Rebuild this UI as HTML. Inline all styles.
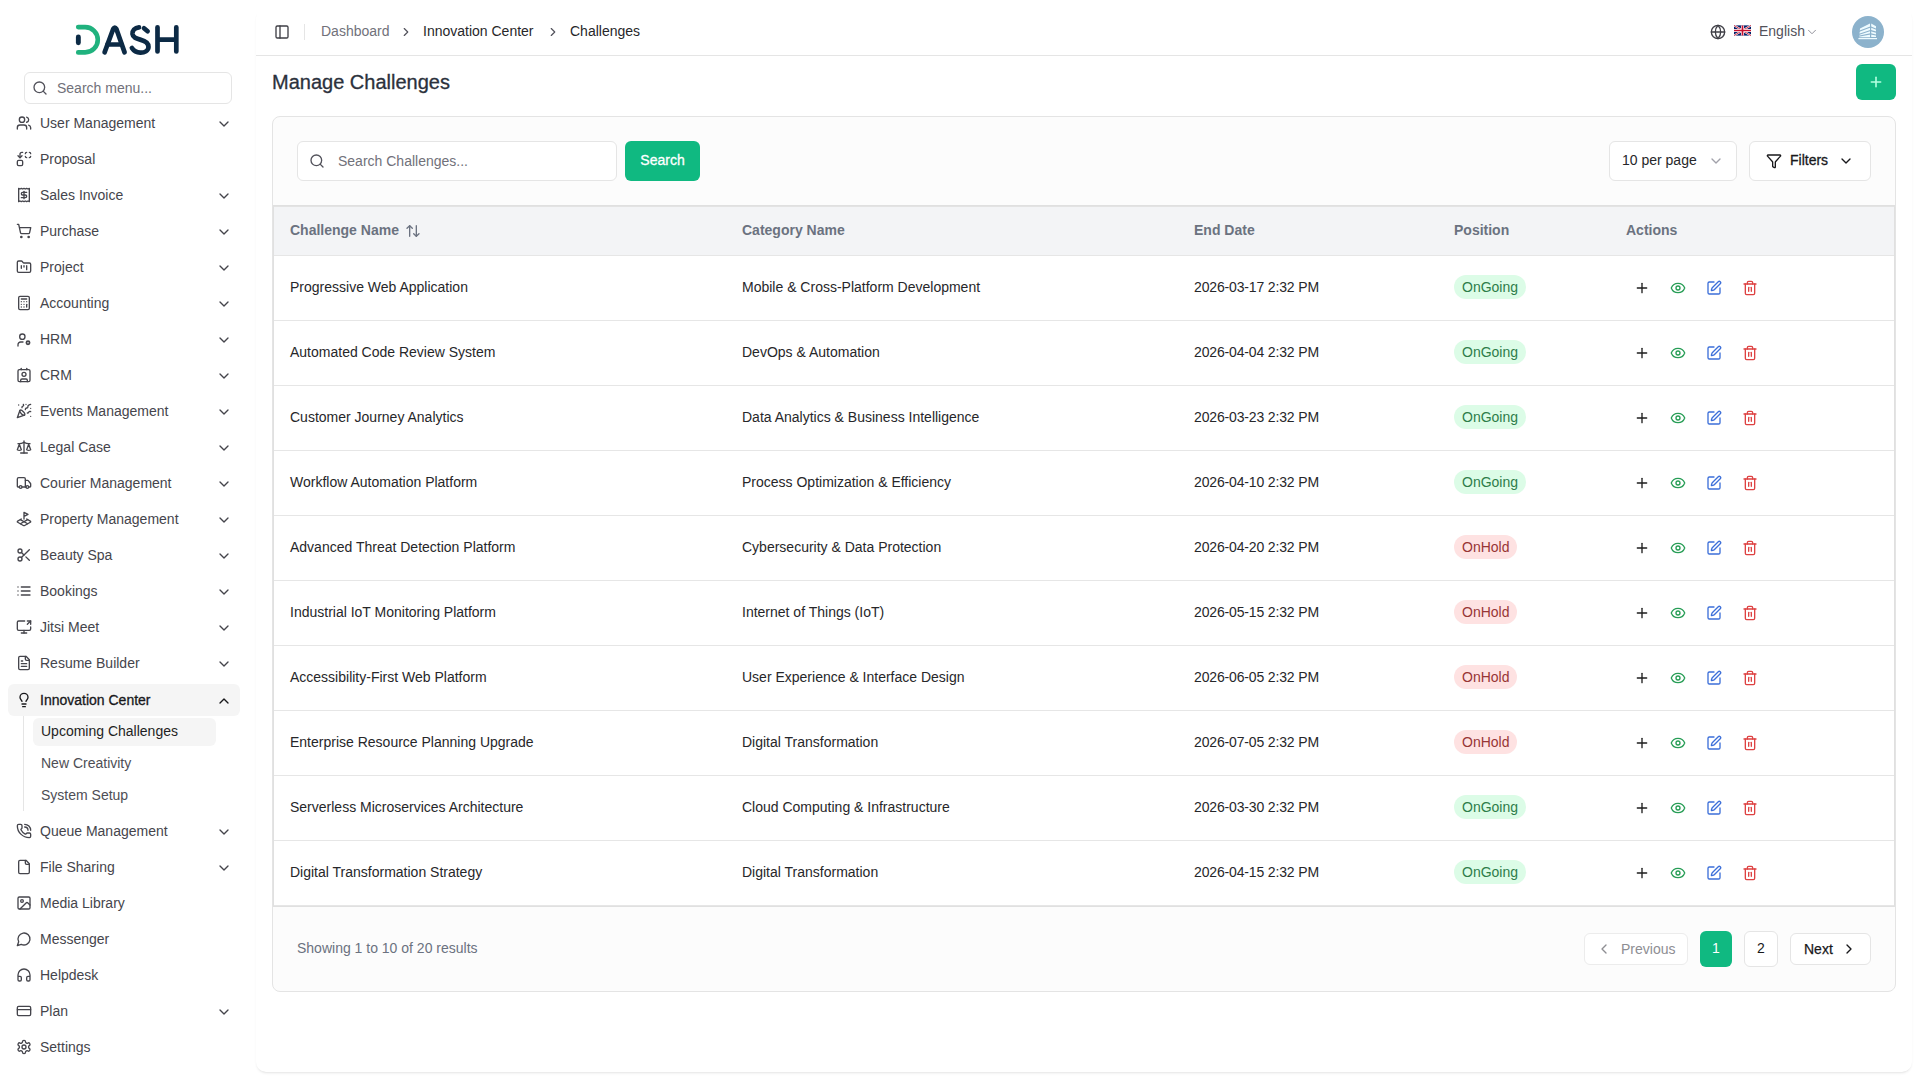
<!DOCTYPE html>
<html><head><meta charset="utf-8"><style>*{box-sizing:border-box;margin:0;padding:0}
html,body{width:1920px;height:1080px;overflow:hidden}
body{background:#fff;font-family:"Liberation Sans",sans-serif;font-size:14px;color:#27272a;position:relative}
svg{display:block}
#sidebar{position:absolute;left:0;top:0;width:256px;height:1080px}
.smenu{position:absolute;left:24px;top:72px;width:208px;height:32px;border:1px solid #e5e5e5;border-radius:6px;background:#fff}
.smenu .sic{position:absolute;left:7px;top:7px;color:#52525b}
.title{-webkit-text-stroke:0.3px #2b313c}
.smenu .sph{position:absolute;left:32px;top:5px;line-height:20px;color:#71717a}
.mi{position:absolute;left:8px;width:232px;height:32px;border-radius:6px;color:#45454c}
.mi .ic{position:absolute;left:8px;top:8px}
.mi .lb{position:absolute;left:32px;top:6px;line-height:20px;white-space:nowrap}
.mi .chev{position:absolute;left:208px;top:9px}
.mi.act{background:#f5f5f5;color:#18181b}
.mi.act .lb{-webkit-text-stroke:0.3px #18181b}
.si{position:absolute;left:33px;width:183px;height:28px;border-radius:6px;padding-left:8px;line-height:26px;color:#4e4e55;white-space:nowrap}
.si.act{background:#f5f5f5;color:#1f1f23}
.subline{position:absolute;left:23px;top:716px;width:1px;height:95px;background:#e5e5e5}
#main{position:absolute;left:256px;top:8px;width:1656px;height:1064px;background:#fff;border-radius:10px;box-shadow:0 2px 3px -1px rgba(0,0,0,.1),0 1px 2px -1px rgba(0,0,0,.06)}
.hdrline{position:absolute;left:256px;top:55px;width:1656px;height:1px;background:#e5e5e5}
.hdr span{position:absolute}
.panelic{left:274px;top:24px;color:#3f3f46}
.vdiv{left:304px;top:24px;width:1px;height:16px;background:#e5e5e5}
.bc{top:21px;line-height:20px;white-space:nowrap}
.bc1{left:321px;color:#71717a}
.bc2{left:423px;color:#27272a}
.bc3{left:570px;color:#27272a}
.bcc{top:25px;color:#52525b}
.globe{left:1710px;top:24px;color:#3f3f46}
.flag{left:1734px;top:25px}
.eng{left:1759px;top:21px;line-height:20px;color:#52525b}
.engchev{left:1805px;top:25px;color:#8a8a93}
.avatar{left:1852px;top:16px}
.title{position:absolute;left:272px;top:68px;font-size:20px;line-height:28px;color:#2b313c;white-space:nowrap}
.addbtn{position:absolute;left:1856px;top:64px;width:40px;height:36px;background:#10b981;border-radius:6px;color:#b5ffe2;display:flex;align-items:center;justify-content:center}
.card{position:absolute;left:272px;top:116px;width:1624px;height:876px;border:1px solid #e4e4e4;border-radius:8px;background:#fcfcfc}
.sinput{position:absolute;left:297px;top:141px;width:320px;height:40px;border:1px solid #e5e5e5;border-radius:6px;background:#fff}
.sic2{position:absolute;left:11px;top:11px;color:#52525b}
.sph2{position:absolute;left:40px;top:9px;line-height:20px;color:#71717a;white-space:nowrap}
.sbtn{position:absolute;left:625px;top:141px;width:75px;height:40px;border-radius:6px;background:#10b981;color:#fff;text-align:center;line-height:38px;-webkit-text-stroke:0.3px #fff}
.perpage{position:absolute;left:1609px;top:141px;width:128px;height:40px;border:1px solid #e5e5e5;border-radius:6px;background:#fff;color:#27272a}
.perpage>span:first-child{position:absolute;left:12px;top:8px;line-height:20px;white-space:nowrap}
.ppchev{position:absolute;left:98px;top:11px;color:#a1a1aa}
.filters{position:absolute;left:1749px;top:141px;width:122px;height:40px;border:1px solid #e5e5e5;border-radius:6px;background:#fff;color:#18181b}
.fic{position:absolute;left:16px;top:11px}
.ftxt{position:absolute;left:40px;top:8px;line-height:20px;-webkit-text-stroke:0.3px #18181b}
.fchev{position:absolute;left:88px;top:11px}
.tbl{position:absolute;left:273px;top:205px;width:1622px;height:702px;border:1px solid #e0e0e0}
.thbg{position:absolute;left:274px;top:206px;width:1620px;height:50px;background:#f3f4f6;border-top:1px solid #e3e3e3;border-bottom:1px solid #e6e6e6}
.thead span{position:absolute;top:220px;line-height:20px;font-weight:700;color:#6b7280;white-space:nowrap}
.thead .h1{left:290px}
.thead .sorti{left:405px;top:223px;color:#6b7280}
.thead .h2{left:742px}.thead .h3{left:1194px}.thead .h4{left:1454px}.thead .h5{left:1626px}
.tr{position:absolute;left:274px;width:1620px;height:65px;background:#fff;border-bottom:1px solid #e6e6e6}
.tr span{position:absolute;white-space:nowrap}
.tr .c1,.tr .c2,.tr .c3{top:21px;line-height:20px;color:#27272a}
.tr .c1{left:16px}.tr .c2{left:468px}.tr .c3{left:920px;letter-spacing:-0.15px}
.badge{left:1180px;top:19px;height:24px;line-height:24px;padding:0 8px;border-radius:12px}
.bg{background:#dcfce7;color:#2e7d4a}
.bh{background:#fee2e2;color:#983535}
.act{top:24px}
.a1{left:1360px;color:#1c1c1c}
.a2{left:1396px;color:#269d55}
.a3{left:1432px;color:#3c6fd9}
.a4{left:1468px;color:#de4242}
.tr:last-of-type{}
.showing{position:absolute;left:297px;top:938px;line-height:20px;color:#6b7280}
.pprev{position:absolute;left:1584px;top:933px;width:104px;height:32px;border:1px solid #ececec;border-radius:6px;background:#fff;color:#8e8e93}
.pprev svg{position:absolute;left:11px;top:7px}
.pprev span{position:absolute;left:36px;top:5px;line-height:20px}
.p1{position:absolute;left:1700px;top:931px;width:32px;height:36px;border-radius:6px;background:#10b981;color:#fff;text-align:center;line-height:34px}
.p2{position:absolute;left:1744px;top:931px;width:34px;height:36px;border-radius:6px;border:1px solid #e5e5e5;background:#fff;color:#18181b;text-align:center;line-height:32px}
.pnext{position:absolute;left:1790px;top:933px;width:81px;height:32px;border:1px solid #e5e5e5;border-radius:6px;background:#fff;color:#18181b}
.pnext span{position:absolute;left:13px;top:5px;line-height:20px;-webkit-text-stroke:0.25px #18181b}
.pnext svg{position:absolute;left:50px;top:7px}
</style></head><body>
<div id="sidebar">
<svg width="140" height="50" viewBox="60 15 140 50" style="position:absolute;left:60px;top:15px">
<g fill="none" stroke-linecap="round" stroke-linejoin="round">
<path d="M78.2 27.1 H85.15 A12.65 12.65 0 0 1 85.15 52.4 H78.2" stroke="#20b27e" stroke-width="4.6"/>
<path d="M78.35 37 V42.8" stroke="#0c2a45" stroke-width="4.9"/>
<g stroke="#0c2a45" stroke-width="4.7">
<path d="M104.6 52.4 L113.2 29 Q114.8 26.3 116.4 29 L124.6 52.4"/>
<path d="M107.5 44.5 H121.5"/>
<path d="M147.6 31.2 L144 28.2"/>
<path d="M139 27.3 C134.6 27.6 132.2 30.6 132.5 34 C132.9 37.6 136.2 38.6 140.2 39.6 C145.2 40.9 148.7 42.6 148.5 47 C148.3 51 144.5 52.7 140.3 52.6 C136.4 52.5 133.6 50.6 131.9 48"/>
<path d="M157.5 27.3 V51.5 M176.3 27.3 V51.5 M157.5 39.6 H176.3"/>
</g></g>
</svg>
<div class="smenu"><span class="sic"><svg width="16" height="16" viewBox="0 0 24 24" fill="none" stroke="currentColor" stroke-width="2" stroke-linecap="round" stroke-linejoin="round" ><circle cx="11" cy="11" r="8"/><path d="m21 21-4.3-4.3"/></svg></span><span class="sph">Search menu...</span></div>
<div class="mi" style="top:107px"><span class="ic"><svg width="16" height="16" viewBox="0 0 24 24" fill="none" stroke="currentColor" stroke-width="2" stroke-linecap="round" stroke-linejoin="round" ><path d="M16 21v-2a4 4 0 0 0-4-4H6a4 4 0 0 0-4 4v2"/><circle cx="9" cy="7" r="4"/><path d="M22 21v-2a4 4 0 0 0-3-3.87"/><path d="M16 3.13a4 4 0 0 1 0 7.75"/></svg></span><span class="lb">User Management</span><span class="chev"><svg width="16" height="16" viewBox="0 0 24 24" fill="none" stroke="currentColor" stroke-width="2" stroke-linecap="round" stroke-linejoin="round" ><path d="m6 9 6 6 6-6"/></svg></span></div><div class="mi" style="top:143px"><span class="ic"><svg width="16" height="16" viewBox="0 0 24 24" fill="none" stroke="currentColor" stroke-width="2" stroke-linecap="round" stroke-linejoin="round" ><path d="M14 4a2 2 0 0 1 2-2"/><path d="M16 10a2 2 0 0 1-2-2"/><path d="M20 2a2 2 0 0 1 2 2"/><path d="M22 8a2 2 0 0 1-2 2"/><path d="m3 7 3 3 3-3"/><path d="M6 10V5a3 3 0 0 1 3-3h1"/><rect x="2" y="14" width="8" height="8" rx="2"/></svg></span><span class="lb">Proposal</span></div><div class="mi" style="top:179px"><span class="ic"><svg width="16" height="16" viewBox="0 0 24 24" fill="none" stroke="currentColor" stroke-width="2" stroke-linecap="round" stroke-linejoin="round" ><path d="M4 2v20l2-1 2 1 2-1 2 1 2-1 2 1 2-1 2 1V2l-2 1-2-1-2 1-2-1-2 1-2-1-2 1Z"/><path d="M16 8h-6a2 2 0 1 0 0 4h4a2 2 0 1 1 0 4H8"/><path d="M12 17.5v-11"/></svg></span><span class="lb">Sales Invoice</span><span class="chev"><svg width="16" height="16" viewBox="0 0 24 24" fill="none" stroke="currentColor" stroke-width="2" stroke-linecap="round" stroke-linejoin="round" ><path d="m6 9 6 6 6-6"/></svg></span></div><div class="mi" style="top:215px"><span class="ic"><svg width="16" height="16" viewBox="0 0 24 24" fill="none" stroke="currentColor" stroke-width="2" stroke-linecap="round" stroke-linejoin="round" ><circle cx="8" cy="21" r="1"/><circle cx="19" cy="21" r="1"/><path d="M2.05 2.05h2l2.66 12.42a2 2 0 0 0 2 1.58h9.78a2 2 0 0 0 1.95-1.57l1.65-7.43H5.12"/></svg></span><span class="lb">Purchase</span><span class="chev"><svg width="16" height="16" viewBox="0 0 24 24" fill="none" stroke="currentColor" stroke-width="2" stroke-linecap="round" stroke-linejoin="round" ><path d="m6 9 6 6 6-6"/></svg></span></div><div class="mi" style="top:251px"><span class="ic"><svg width="16" height="16" viewBox="0 0 24 24" fill="none" stroke="currentColor" stroke-width="2" stroke-linecap="round" stroke-linejoin="round" ><path d="M4 20h16a2 2 0 0 0 2-2V8a2 2 0 0 0-2-2h-7.93a2 2 0 0 1-1.66-.9l-.82-1.2A2 2 0 0 0 7.93 3H4a2 2 0 0 0-2 2v13c0 1.1.9 2 2 2Z"/><path d="M8 10v4"/><path d="M12 10v2"/><path d="M16 10v6"/></svg></span><span class="lb">Project</span><span class="chev"><svg width="16" height="16" viewBox="0 0 24 24" fill="none" stroke="currentColor" stroke-width="2" stroke-linecap="round" stroke-linejoin="round" ><path d="m6 9 6 6 6-6"/></svg></span></div><div class="mi" style="top:287px"><span class="ic"><svg width="16" height="16" viewBox="0 0 24 24" fill="none" stroke="currentColor" stroke-width="2" stroke-linecap="round" stroke-linejoin="round" ><rect width="16" height="20" x="4" y="2" rx="2"/><line x1="8" x2="16" y1="6" y2="6"/><line x1="16" x2="16" y1="14" y2="18"/><path d="M16 10h.01"/><path d="M12 10h.01"/><path d="M8 10h.01"/><path d="M12 14h.01"/><path d="M8 14h.01"/><path d="M12 18h.01"/><path d="M8 18h.01"/></svg></span><span class="lb">Accounting</span><span class="chev"><svg width="16" height="16" viewBox="0 0 24 24" fill="none" stroke="currentColor" stroke-width="2" stroke-linecap="round" stroke-linejoin="round" ><path d="m6 9 6 6 6-6"/></svg></span></div><div class="mi" style="top:323px"><span class="ic"><svg width="16" height="16" viewBox="0 0 24 24" fill="none" stroke="currentColor" stroke-width="2" stroke-linecap="round" stroke-linejoin="round" ><circle cx="9.5" cy="8.5" r="4"/><path d="M3 22.5v-2a4 4 0 0 1 4-4h3.5"/><circle cx="18" cy="17.5" r="2.4" stroke-width="2.6"/></svg></span><span class="lb">HRM</span><span class="chev"><svg width="16" height="16" viewBox="0 0 24 24" fill="none" stroke="currentColor" stroke-width="2" stroke-linecap="round" stroke-linejoin="round" ><path d="m6 9 6 6 6-6"/></svg></span></div><div class="mi" style="top:359px"><span class="ic"><svg width="16" height="16" viewBox="0 0 24 24" fill="none" stroke="currentColor" stroke-width="2" stroke-linecap="round" stroke-linejoin="round" ><path d="M16 2v2"/><path d="M7 22v-2a2 2 0 0 1 2-2h6a2 2 0 0 1 2 2v2"/><path d="M8 2v2"/><circle cx="12" cy="11" r="3"/><rect x="3" y="4" width="18" height="18" rx="2"/></svg></span><span class="lb">CRM</span><span class="chev"><svg width="16" height="16" viewBox="0 0 24 24" fill="none" stroke="currentColor" stroke-width="2" stroke-linecap="round" stroke-linejoin="round" ><path d="m6 9 6 6 6-6"/></svg></span></div><div class="mi" style="top:395px"><span class="ic"><svg width="16" height="16" viewBox="0 0 24 24" fill="none" stroke="currentColor" stroke-width="2" stroke-linecap="round" stroke-linejoin="round" ><path d="M5.8 11.3 2 22l10.7-3.79"/><path d="M4 3h.01"/><path d="M22 8h.01"/><path d="M15 2h.01"/><path d="M22 20h.01"/><path d="m22 2-2.24.75a2.9 2.9 0 0 0-1.96 3.12c.1.86-.57 1.63-1.45 1.63h-.38c-.86 0-1.6.6-1.76 1.44L14 10"/><path d="m22 13-.82-.33c-.86-.34-1.82.2-1.98 1.11c-.11.7-.72 1.22-1.43 1.22H17"/><path d="m11 2 .33.82c.34.86-.2 1.82-1.11 1.98C9.52 4.9 9 5.52 9 6.23V7"/><path d="M11 13c1.93 1.93 2.83 4.17 2 5-.83.83-3.07-.07-5-2-1.93-1.93-2.83-4.17-2-5 .83-.83 3.07.07 5 2Z"/></svg></span><span class="lb">Events Management</span><span class="chev"><svg width="16" height="16" viewBox="0 0 24 24" fill="none" stroke="currentColor" stroke-width="2" stroke-linecap="round" stroke-linejoin="round" ><path d="m6 9 6 6 6-6"/></svg></span></div><div class="mi" style="top:431px"><span class="ic"><svg width="16" height="16" viewBox="0 0 24 24" fill="none" stroke="currentColor" stroke-width="2" stroke-linecap="round" stroke-linejoin="round" ><path d="m16 16 3-8 3 8c-.87.65-1.92 1-3 1s-2.13-.35-3-1Z"/><path d="m2 16 3-8 3 8c-.87.65-1.92 1-3 1s-2.13-.35-3-1Z"/><path d="M7 21h10"/><path d="M12 3v18"/><path d="M3 7h2c2 0 5-1 7-2 2 1 5 2 7 2h2"/></svg></span><span class="lb">Legal Case</span><span class="chev"><svg width="16" height="16" viewBox="0 0 24 24" fill="none" stroke="currentColor" stroke-width="2" stroke-linecap="round" stroke-linejoin="round" ><path d="m6 9 6 6 6-6"/></svg></span></div><div class="mi" style="top:467px"><span class="ic"><svg width="16" height="16" viewBox="0 0 24 24" fill="none" stroke="currentColor" stroke-width="2" stroke-linecap="round" stroke-linejoin="round" ><path d="M14 18V6a2 2 0 0 0-2-2H4a2 2 0 0 0-2 2v11a1 1 0 0 0 1 1h2"/><path d="M15 18H9"/><path d="M19 18h2a1 1 0 0 0 1-1v-3.65a1 1 0 0 0-.22-.624l-3.48-4.35A1 1 0 0 0 17.52 8H14"/><circle cx="17" cy="18" r="2"/><circle cx="7" cy="18" r="2"/></svg></span><span class="lb">Courier Management</span><span class="chev"><svg width="16" height="16" viewBox="0 0 24 24" fill="none" stroke="currentColor" stroke-width="2" stroke-linecap="round" stroke-linejoin="round" ><path d="m6 9 6 6 6-6"/></svg></span></div><div class="mi" style="top:503px"><span class="ic"><svg width="16" height="16" viewBox="0 0 24 24" fill="none" stroke="currentColor" stroke-width="2" stroke-linecap="round" stroke-linejoin="round" ><path d="m12 8 6-3-6-3v10"/><path d="m8 11.99-5.5 3.14a1 1 0 0 0 0 1.74l8.5 4.86a2 2 0 0 0 2 0l8.5-4.86a1 1 0 0 0 0-1.74L16 12"/><path d="m6.49 12.85 11.02 6.3"/><path d="M17.51 12.85 6.5 19.15"/></svg></span><span class="lb">Property Management</span><span class="chev"><svg width="16" height="16" viewBox="0 0 24 24" fill="none" stroke="currentColor" stroke-width="2" stroke-linecap="round" stroke-linejoin="round" ><path d="m6 9 6 6 6-6"/></svg></span></div><div class="mi" style="top:539px"><span class="ic"><svg width="16" height="16" viewBox="0 0 24 24" fill="none" stroke="currentColor" stroke-width="2" stroke-linecap="round" stroke-linejoin="round" ><circle cx="6" cy="6" r="3"/><path d="M8.12 8.12 12 12"/><path d="M20 4 8.12 15.88"/><circle cx="6" cy="18" r="3"/><path d="M14.8 14.8 20 20"/></svg></span><span class="lb">Beauty Spa</span><span class="chev"><svg width="16" height="16" viewBox="0 0 24 24" fill="none" stroke="currentColor" stroke-width="2" stroke-linecap="round" stroke-linejoin="round" ><path d="m6 9 6 6 6-6"/></svg></span></div><div class="mi" style="top:575px"><span class="ic"><svg width="16" height="16" viewBox="0 0 24 24" fill="none" stroke="currentColor" stroke-width="2" stroke-linecap="round" stroke-linejoin="round" ><path d="M3 12h.01"/><path d="M3 18h.01"/><path d="M3 6h.01"/><path d="M8 12h13"/><path d="M8 18h13"/><path d="M8 6h13"/></svg></span><span class="lb">Bookings</span><span class="chev"><svg width="16" height="16" viewBox="0 0 24 24" fill="none" stroke="currentColor" stroke-width="2" stroke-linecap="round" stroke-linejoin="round" ><path d="m6 9 6 6 6-6"/></svg></span></div><div class="mi" style="top:611px"><span class="ic"><svg width="16" height="16" viewBox="0 0 24 24" fill="none" stroke="currentColor" stroke-width="2" stroke-linecap="round" stroke-linejoin="round" ><path d="M13 3H4a2 2 0 0 0-2 2v10a2 2 0 0 0 2 2h16a2 2 0 0 0 2-2v-3"/><path d="M8 21h8"/><path d="M12 17v4"/><path d="m17 8 5-5"/><path d="M17 3h5v5"/></svg></span><span class="lb">Jitsi Meet</span><span class="chev"><svg width="16" height="16" viewBox="0 0 24 24" fill="none" stroke="currentColor" stroke-width="2" stroke-linecap="round" stroke-linejoin="round" ><path d="m6 9 6 6 6-6"/></svg></span></div><div class="mi" style="top:647px"><span class="ic"><svg width="16" height="16" viewBox="0 0 24 24" fill="none" stroke="currentColor" stroke-width="2" stroke-linecap="round" stroke-linejoin="round" ><path d="M15 2H6a2 2 0 0 0-2 2v16a2 2 0 0 0 2 2h12a2 2 0 0 0 2-2V7Z"/><path d="M14 2v4a2 2 0 0 0 2 2h4"/><path d="M10 9H8"/><path d="M16 13H8"/><path d="M16 17H8"/></svg></span><span class="lb">Resume Builder</span><span class="chev"><svg width="16" height="16" viewBox="0 0 24 24" fill="none" stroke="currentColor" stroke-width="2" stroke-linecap="round" stroke-linejoin="round" ><path d="m6 9 6 6 6-6"/></svg></span></div><div class="mi act" style="top:684px"><span class="ic"><svg width="16" height="16" viewBox="0 0 24 24" fill="none" stroke="currentColor" stroke-width="2" stroke-linecap="round" stroke-linejoin="round" ><path d="M15 14c.2-1 .7-1.7 1.5-2.5 1-.9 1.5-2.2 1.5-3.5A6 6 0 0 0 6 8c0 1 .2 2.2 1.5 3.5.7.7 1.3 1.5 1.5 2.5"/><path d="M9 18h6"/><path d="M10 22h4"/></svg></span><span class="lb">Innovation Center</span><span class="chev"><svg width="16" height="16" viewBox="0 0 24 24" fill="none" stroke="currentColor" stroke-width="2" stroke-linecap="round" stroke-linejoin="round" ><path d="m18 15-6-6-6 6"/></svg></span></div><div class="si act" style="top:718px">Upcoming Challenges</div><div class="si" style="top:750px">New Creativity</div><div class="si" style="top:782px">System Setup</div><div class="mi" style="top:815px"><span class="ic"><svg width="16" height="16" viewBox="0 0 24 24" fill="none" stroke="currentColor" stroke-width="2" stroke-linecap="round" stroke-linejoin="round" ><path d="M13 2a9 9 0 0 1 9 9"/><path d="M13 6a5 5 0 0 1 5 5"/><path d="M13.832 16.568a1 1 0 0 0 1.213-.303l.355-.465A2 2 0 0 1 17 15h3a2 2 0 0 1 2 2v3a2 2 0 0 1-2 2A18 18 0 0 1 2 4a2 2 0 0 1 2-2h3a2 2 0 0 1 2 2v3a2 2 0 0 1-.8 1.6l-.468.351a1 1 0 0 0-.292 1.233 14 14 0 0 0 6.392 6.384"/></svg></span><span class="lb">Queue Management</span><span class="chev"><svg width="16" height="16" viewBox="0 0 24 24" fill="none" stroke="currentColor" stroke-width="2" stroke-linecap="round" stroke-linejoin="round" ><path d="m6 9 6 6 6-6"/></svg></span></div><div class="mi" style="top:851px"><span class="ic"><svg width="16" height="16" viewBox="0 0 24 24" fill="none" stroke="currentColor" stroke-width="2" stroke-linecap="round" stroke-linejoin="round" ><path d="M15 2H6a2 2 0 0 0-2 2v16a2 2 0 0 0 2 2h12a2 2 0 0 0 2-2V7Z"/><path d="M14 2v4a2 2 0 0 0 2 2h4"/></svg></span><span class="lb">File Sharing</span><span class="chev"><svg width="16" height="16" viewBox="0 0 24 24" fill="none" stroke="currentColor" stroke-width="2" stroke-linecap="round" stroke-linejoin="round" ><path d="m6 9 6 6 6-6"/></svg></span></div><div class="mi" style="top:887px"><span class="ic"><svg width="16" height="16" viewBox="0 0 24 24" fill="none" stroke="currentColor" stroke-width="2" stroke-linecap="round" stroke-linejoin="round" ><rect width="18" height="18" x="3" y="3" rx="2" ry="2"/><circle cx="9" cy="9" r="2"/><path d="m21 15-3.086-3.086a2 2 0 0 0-2.828 0L6 21"/></svg></span><span class="lb">Media Library</span></div><div class="mi" style="top:923px"><span class="ic"><svg width="16" height="16" viewBox="0 0 24 24" fill="none" stroke="currentColor" stroke-width="2" stroke-linecap="round" stroke-linejoin="round" ><path d="M7.9 20A9 9 0 1 0 4 16.1L2 22Z"/></svg></span><span class="lb">Messenger</span></div><div class="mi" style="top:959px"><span class="ic"><svg width="16" height="16" viewBox="0 0 24 24" fill="none" stroke="currentColor" stroke-width="2" stroke-linecap="round" stroke-linejoin="round" ><path d="M3 14h3a2 2 0 0 1 2 2v3a2 2 0 0 1-2 2H5a2 2 0 0 1-2-2v-7a9 9 0 0 1 18 0v7a2 2 0 0 1-2 2h-1a2 2 0 0 1-2-2v-3a2 2 0 0 1 2-2h3"/></svg></span><span class="lb">Helpdesk</span></div><div class="mi" style="top:995px"><span class="ic"><svg width="16" height="16" viewBox="0 0 24 24" fill="none" stroke="currentColor" stroke-width="2" stroke-linecap="round" stroke-linejoin="round" ><rect width="20" height="14" x="2" y="5" rx="2"/><line x1="2" x2="22" y1="10" y2="10"/></svg></span><span class="lb">Plan</span><span class="chev"><svg width="16" height="16" viewBox="0 0 24 24" fill="none" stroke="currentColor" stroke-width="2" stroke-linecap="round" stroke-linejoin="round" ><path d="m6 9 6 6 6-6"/></svg></span></div><div class="mi" style="top:1031px"><span class="ic"><svg width="16" height="16" viewBox="0 0 24 24" fill="none" stroke="currentColor" stroke-width="2" stroke-linecap="round" stroke-linejoin="round" ><path d="M12.22 2h-.44a2 2 0 0 0-2 2v.18a2 2 0 0 1-1 1.73l-.43.25a2 2 0 0 1-2 0l-.15-.08a2 2 0 0 0-2.73.73l-.22.38a2 2 0 0 0 .73 2.73l.15.1a2 2 0 0 1 1 1.72v.51a2 2 0 0 1-1 1.74l-.15.09a2 2 0 0 0-.73 2.730l.22.38a2 2 0 0 0 2.73.73l.15-.08a2 2 0 0 1 2 0l.43.25a2 2 0 0 1 1 1.73V20a2 2 0 0 0 2 2h.44a2 2 0 0 0 2-2v-.18a2 2 0 0 1 1-1.73l.43-.25a2 2 0 0 1 2 0l.15.08a2 2 0 0 0 2.73-.73l.22-.39a2 2 0 0 0-.73-2.73l-.15-.08a2 2 0 0 1-1-1.74v-.5a2 2 0 0 1 1-1.74l.15-.09a2 2 0 0 0 .73-2.73l-.22-.38a2 2 0 0 0-2.73-.73l-.15.08a2 2 0 0 1-2 0l-.43-.25a2 2 0 0 1-1-1.73V4a2 2 0 0 0-2-2z"/><circle cx="12" cy="12" r="3"/></svg></span><span class="lb">Settings</span></div>
<div class="subline"></div>
</div>
<div id="main"></div><div class="hdrline"></div>
<div class="hdr">
 <span class="panelic"><svg width="16" height="16" viewBox="0 0 24 24" fill="none" stroke="currentColor" stroke-width="2" stroke-linecap="round" stroke-linejoin="round" ><rect width="18" height="18" x="3" y="3" rx="2"/><path d="M9 3v18"/></svg></span>
 <span class="vdiv"></span>
 <span class="bc bc1">Dashboard</span><span class="bcc" style="left:399px"><svg width="14" height="14" viewBox="0 0 24 24" fill="none" stroke="currentColor" stroke-width="2" stroke-linecap="round" stroke-linejoin="round" ><path d="m9 18 6-6-6-6"/></svg></span>
 <span class="bc bc2">Innovation Center</span><span class="bcc" style="left:546px"><svg width="14" height="14" viewBox="0 0 24 24" fill="none" stroke="currentColor" stroke-width="2" stroke-linecap="round" stroke-linejoin="round" ><path d="m9 18 6-6-6-6"/></svg></span>
 <span class="bc bc3">Challenges</span>
 <span class="globe"><svg width="16" height="16" viewBox="0 0 24 24" fill="none" stroke="currentColor" stroke-width="2" stroke-linecap="round" stroke-linejoin="round" ><circle cx="12" cy="12" r="10"/><path d="M12 2a14.5 14.5 0 0 0 0 20 14.5 14.5 0 0 0 0-20"/><path d="M2 12h20"/></svg></span>
 <span class="flag"><svg width="17" height="11" viewBox="0 0 60 36"><rect width="60" height="36" fill="#012169"/><path d="M0 0L60 36M60 0L0 36" stroke="#fff" stroke-width="7"/><path d="M0 0L60 36M60 0L0 36" stroke="#C8102E" stroke-width="3"/><path d="M30 0V36M0 18H60" stroke="#fff" stroke-width="11"/><path d="M30 0V36M0 18H60" stroke="#C8102E" stroke-width="6"/></svg></span>
 <span class="eng">English</span><span class="engchev"><svg width="14" height="14" viewBox="0 0 24 24" fill="none" stroke="currentColor" stroke-width="1.6" stroke-linecap="round" stroke-linejoin="round" ><path d="m6 9 6 6 6-6"/></svg></span>
 <span class="avatar"><svg width="32" height="32" viewBox="0 0 32 32"><circle cx="16" cy="16" r="16" fill="#8cb2cc"/><g fill="#eefbff"><path d="M8 12.4 L18 7.5 V21.3 H7.2 Z"/><path d="M19.2 7.6 L24 10.3 V21 H19.2 Z"/></g><g stroke="#8cb2cc" stroke-width="1.1" fill="none"><path d="M6.5 15.6 L18.5 10.9 M6.5 18.4 L18.5 14.6 M6.5 20.2 L18.5 17.9"/><path d="M18.8 11 L25 13.6 M18.8 14.6 L25 16.4 M18.8 17.9 L25 19.3"/></g><path d="M6.4 22.6 H25" stroke="#eefbff" stroke-width="1.2"/></svg></span>
</div>
<div class="title">Manage Challenges</div>
<div class="addbtn"><svg width="16" height="16" viewBox="0 0 24 24" fill="none" stroke="currentColor" stroke-width="2.4" stroke-linecap="round" stroke-linejoin="round" ><path d="M5 12h14"/><path d="M12 5v14"/></svg></div>
<div class="card"></div><div class="tbl"></div><div class="thbg"></div>
 <div class="sinput"><span class="sic2"><svg width="16" height="16" viewBox="0 0 24 24" fill="none" stroke="currentColor" stroke-width="2" stroke-linecap="round" stroke-linejoin="round" ><circle cx="11" cy="11" r="8"/><path d="m21 21-4.3-4.3"/></svg></span><span class="sph2">Search Challenges...</span></div>
 <div class="sbtn">Search</div>
 <div class="perpage"><span>10 per page</span><span class="ppchev"><svg width="16" height="16" viewBox="0 0 24 24" fill="none" stroke="currentColor" stroke-width="2" stroke-linecap="round" stroke-linejoin="round" ><path d="m6 9 6 6 6-6"/></svg></span></div>
 <div class="filters"><span class="fic"><svg width="16" height="16" viewBox="0 0 24 24" fill="none" stroke="currentColor" stroke-width="2" stroke-linecap="round" stroke-linejoin="round" ><path d="M10 20a1 1 0 0 0 .553.895l2 1A1 1 0 0 0 14 21v-7a2 2 0 0 1 .517-1.341L21.74 4.67A1 1 0 0 0 21 3H3a1 1 0 0 0-.742 1.67l7.225 7.989A2 2 0 0 1 10 14z"/></svg></span><span class="ftxt">Filters</span><span class="fchev"><svg width="16" height="16" viewBox="0 0 24 24" fill="none" stroke="currentColor" stroke-width="2" stroke-linecap="round" stroke-linejoin="round" ><path d="m6 9 6 6 6-6"/></svg></span></div>
 <div class="thead">
  <span class="h1">Challenge Name</span><span class="sorti"><svg width="16" height="16" viewBox="0 0 24 24" fill="none" stroke="currentColor" stroke-width="2" stroke-linecap="round" stroke-linejoin="round" ><path d="m21 16-4 4-4-4"/><path d="M17 20V4"/><path d="m3 8 4-4 4 4"/><path d="M7 4v16"/></svg></span>
  <span class="h2">Category Name</span><span class="h3">End Date</span><span class="h4">Position</span><span class="h5">Actions</span>
 </div>
 <div class="tr" style="top:256px">
<span class="c1">Progressive Web Application</span><span class="c2">Mobile &amp; Cross-Platform Development</span><span class="c3">2026-03-17 2:32 PM</span>
<span class="badge bg">OnGoing</span>
<span class="act a1"><svg width="16" height="16" viewBox="0 0 24 24" fill="none" stroke="currentColor" stroke-width="2" stroke-linecap="round" stroke-linejoin="round" ><path d="M5 12h14"/><path d="M12 5v14"/></svg></span><span class="act a2"><svg width="16" height="16" viewBox="0 0 24 24" fill="none" stroke="currentColor" stroke-width="2" stroke-linecap="round" stroke-linejoin="round" ><path d="M2.062 12.348a1 1 0 0 1 0-.696 10.75 10.75 0 0 1 19.876 0 1 1 0 0 1 0 .696 10.75 10.75 0 0 1-19.876 0"/><circle cx="12" cy="12" r="3"/></svg></span><span class="act a3"><svg width="16" height="16" viewBox="0 0 24 24" fill="none" stroke="currentColor" stroke-width="2" stroke-linecap="round" stroke-linejoin="round" ><path d="M12 3H5a2 2 0 0 0-2 2v14a2 2 0 0 0 2 2h14a2 2 0 0 0 2-2v-7"/><path d="M18.375 2.625a1 1 0 0 1 3 3l-9.013 9.014a2 2 0 0 1-.853.505l-2.873.84a.5.5 0 0 1-.62-.62l.84-2.873a2 2 0 0 1 .506-.852z"/></svg></span><span class="act a4"><svg width="16" height="16" viewBox="0 0 24 24" fill="none" stroke="currentColor" stroke-width="2" stroke-linecap="round" stroke-linejoin="round" ><path d="M3 6h18"/><path d="M19 6v14c0 1-1 2-2 2H7c-1 0-2-1-2-2V6"/><path d="M8 6V4c0-1 1-2 2-2h4c1 0 2 1 2 2v2"/><line x1="10" x2="10" y1="11" y2="17"/><line x1="14" x2="14" y1="11" y2="17"/></svg></span>
</div><div class="tr" style="top:321px">
<span class="c1">Automated Code Review System</span><span class="c2">DevOps &amp; Automation</span><span class="c3">2026-04-04 2:32 PM</span>
<span class="badge bg">OnGoing</span>
<span class="act a1"><svg width="16" height="16" viewBox="0 0 24 24" fill="none" stroke="currentColor" stroke-width="2" stroke-linecap="round" stroke-linejoin="round" ><path d="M5 12h14"/><path d="M12 5v14"/></svg></span><span class="act a2"><svg width="16" height="16" viewBox="0 0 24 24" fill="none" stroke="currentColor" stroke-width="2" stroke-linecap="round" stroke-linejoin="round" ><path d="M2.062 12.348a1 1 0 0 1 0-.696 10.75 10.75 0 0 1 19.876 0 1 1 0 0 1 0 .696 10.75 10.75 0 0 1-19.876 0"/><circle cx="12" cy="12" r="3"/></svg></span><span class="act a3"><svg width="16" height="16" viewBox="0 0 24 24" fill="none" stroke="currentColor" stroke-width="2" stroke-linecap="round" stroke-linejoin="round" ><path d="M12 3H5a2 2 0 0 0-2 2v14a2 2 0 0 0 2 2h14a2 2 0 0 0 2-2v-7"/><path d="M18.375 2.625a1 1 0 0 1 3 3l-9.013 9.014a2 2 0 0 1-.853.505l-2.873.84a.5.5 0 0 1-.62-.62l.84-2.873a2 2 0 0 1 .506-.852z"/></svg></span><span class="act a4"><svg width="16" height="16" viewBox="0 0 24 24" fill="none" stroke="currentColor" stroke-width="2" stroke-linecap="round" stroke-linejoin="round" ><path d="M3 6h18"/><path d="M19 6v14c0 1-1 2-2 2H7c-1 0-2-1-2-2V6"/><path d="M8 6V4c0-1 1-2 2-2h4c1 0 2 1 2 2v2"/><line x1="10" x2="10" y1="11" y2="17"/><line x1="14" x2="14" y1="11" y2="17"/></svg></span>
</div><div class="tr" style="top:386px">
<span class="c1">Customer Journey Analytics</span><span class="c2">Data Analytics &amp; Business Intelligence</span><span class="c3">2026-03-23 2:32 PM</span>
<span class="badge bg">OnGoing</span>
<span class="act a1"><svg width="16" height="16" viewBox="0 0 24 24" fill="none" stroke="currentColor" stroke-width="2" stroke-linecap="round" stroke-linejoin="round" ><path d="M5 12h14"/><path d="M12 5v14"/></svg></span><span class="act a2"><svg width="16" height="16" viewBox="0 0 24 24" fill="none" stroke="currentColor" stroke-width="2" stroke-linecap="round" stroke-linejoin="round" ><path d="M2.062 12.348a1 1 0 0 1 0-.696 10.75 10.75 0 0 1 19.876 0 1 1 0 0 1 0 .696 10.75 10.75 0 0 1-19.876 0"/><circle cx="12" cy="12" r="3"/></svg></span><span class="act a3"><svg width="16" height="16" viewBox="0 0 24 24" fill="none" stroke="currentColor" stroke-width="2" stroke-linecap="round" stroke-linejoin="round" ><path d="M12 3H5a2 2 0 0 0-2 2v14a2 2 0 0 0 2 2h14a2 2 0 0 0 2-2v-7"/><path d="M18.375 2.625a1 1 0 0 1 3 3l-9.013 9.014a2 2 0 0 1-.853.505l-2.873.84a.5.5 0 0 1-.62-.62l.84-2.873a2 2 0 0 1 .506-.852z"/></svg></span><span class="act a4"><svg width="16" height="16" viewBox="0 0 24 24" fill="none" stroke="currentColor" stroke-width="2" stroke-linecap="round" stroke-linejoin="round" ><path d="M3 6h18"/><path d="M19 6v14c0 1-1 2-2 2H7c-1 0-2-1-2-2V6"/><path d="M8 6V4c0-1 1-2 2-2h4c1 0 2 1 2 2v2"/><line x1="10" x2="10" y1="11" y2="17"/><line x1="14" x2="14" y1="11" y2="17"/></svg></span>
</div><div class="tr" style="top:451px">
<span class="c1">Workflow Automation Platform</span><span class="c2">Process Optimization &amp; Efficiency</span><span class="c3">2026-04-10 2:32 PM</span>
<span class="badge bg">OnGoing</span>
<span class="act a1"><svg width="16" height="16" viewBox="0 0 24 24" fill="none" stroke="currentColor" stroke-width="2" stroke-linecap="round" stroke-linejoin="round" ><path d="M5 12h14"/><path d="M12 5v14"/></svg></span><span class="act a2"><svg width="16" height="16" viewBox="0 0 24 24" fill="none" stroke="currentColor" stroke-width="2" stroke-linecap="round" stroke-linejoin="round" ><path d="M2.062 12.348a1 1 0 0 1 0-.696 10.75 10.75 0 0 1 19.876 0 1 1 0 0 1 0 .696 10.75 10.75 0 0 1-19.876 0"/><circle cx="12" cy="12" r="3"/></svg></span><span class="act a3"><svg width="16" height="16" viewBox="0 0 24 24" fill="none" stroke="currentColor" stroke-width="2" stroke-linecap="round" stroke-linejoin="round" ><path d="M12 3H5a2 2 0 0 0-2 2v14a2 2 0 0 0 2 2h14a2 2 0 0 0 2-2v-7"/><path d="M18.375 2.625a1 1 0 0 1 3 3l-9.013 9.014a2 2 0 0 1-.853.505l-2.873.84a.5.5 0 0 1-.62-.62l.84-2.873a2 2 0 0 1 .506-.852z"/></svg></span><span class="act a4"><svg width="16" height="16" viewBox="0 0 24 24" fill="none" stroke="currentColor" stroke-width="2" stroke-linecap="round" stroke-linejoin="round" ><path d="M3 6h18"/><path d="M19 6v14c0 1-1 2-2 2H7c-1 0-2-1-2-2V6"/><path d="M8 6V4c0-1 1-2 2-2h4c1 0 2 1 2 2v2"/><line x1="10" x2="10" y1="11" y2="17"/><line x1="14" x2="14" y1="11" y2="17"/></svg></span>
</div><div class="tr" style="top:516px">
<span class="c1">Advanced Threat Detection Platform</span><span class="c2">Cybersecurity &amp; Data Protection</span><span class="c3">2026-04-20 2:32 PM</span>
<span class="badge bh">OnHold</span>
<span class="act a1"><svg width="16" height="16" viewBox="0 0 24 24" fill="none" stroke="currentColor" stroke-width="2" stroke-linecap="round" stroke-linejoin="round" ><path d="M5 12h14"/><path d="M12 5v14"/></svg></span><span class="act a2"><svg width="16" height="16" viewBox="0 0 24 24" fill="none" stroke="currentColor" stroke-width="2" stroke-linecap="round" stroke-linejoin="round" ><path d="M2.062 12.348a1 1 0 0 1 0-.696 10.75 10.75 0 0 1 19.876 0 1 1 0 0 1 0 .696 10.75 10.75 0 0 1-19.876 0"/><circle cx="12" cy="12" r="3"/></svg></span><span class="act a3"><svg width="16" height="16" viewBox="0 0 24 24" fill="none" stroke="currentColor" stroke-width="2" stroke-linecap="round" stroke-linejoin="round" ><path d="M12 3H5a2 2 0 0 0-2 2v14a2 2 0 0 0 2 2h14a2 2 0 0 0 2-2v-7"/><path d="M18.375 2.625a1 1 0 0 1 3 3l-9.013 9.014a2 2 0 0 1-.853.505l-2.873.84a.5.5 0 0 1-.62-.62l.84-2.873a2 2 0 0 1 .506-.852z"/></svg></span><span class="act a4"><svg width="16" height="16" viewBox="0 0 24 24" fill="none" stroke="currentColor" stroke-width="2" stroke-linecap="round" stroke-linejoin="round" ><path d="M3 6h18"/><path d="M19 6v14c0 1-1 2-2 2H7c-1 0-2-1-2-2V6"/><path d="M8 6V4c0-1 1-2 2-2h4c1 0 2 1 2 2v2"/><line x1="10" x2="10" y1="11" y2="17"/><line x1="14" x2="14" y1="11" y2="17"/></svg></span>
</div><div class="tr" style="top:581px">
<span class="c1">Industrial IoT Monitoring Platform</span><span class="c2">Internet of Things (IoT)</span><span class="c3">2026-05-15 2:32 PM</span>
<span class="badge bh">OnHold</span>
<span class="act a1"><svg width="16" height="16" viewBox="0 0 24 24" fill="none" stroke="currentColor" stroke-width="2" stroke-linecap="round" stroke-linejoin="round" ><path d="M5 12h14"/><path d="M12 5v14"/></svg></span><span class="act a2"><svg width="16" height="16" viewBox="0 0 24 24" fill="none" stroke="currentColor" stroke-width="2" stroke-linecap="round" stroke-linejoin="round" ><path d="M2.062 12.348a1 1 0 0 1 0-.696 10.75 10.75 0 0 1 19.876 0 1 1 0 0 1 0 .696 10.75 10.75 0 0 1-19.876 0"/><circle cx="12" cy="12" r="3"/></svg></span><span class="act a3"><svg width="16" height="16" viewBox="0 0 24 24" fill="none" stroke="currentColor" stroke-width="2" stroke-linecap="round" stroke-linejoin="round" ><path d="M12 3H5a2 2 0 0 0-2 2v14a2 2 0 0 0 2 2h14a2 2 0 0 0 2-2v-7"/><path d="M18.375 2.625a1 1 0 0 1 3 3l-9.013 9.014a2 2 0 0 1-.853.505l-2.873.84a.5.5 0 0 1-.62-.62l.84-2.873a2 2 0 0 1 .506-.852z"/></svg></span><span class="act a4"><svg width="16" height="16" viewBox="0 0 24 24" fill="none" stroke="currentColor" stroke-width="2" stroke-linecap="round" stroke-linejoin="round" ><path d="M3 6h18"/><path d="M19 6v14c0 1-1 2-2 2H7c-1 0-2-1-2-2V6"/><path d="M8 6V4c0-1 1-2 2-2h4c1 0 2 1 2 2v2"/><line x1="10" x2="10" y1="11" y2="17"/><line x1="14" x2="14" y1="11" y2="17"/></svg></span>
</div><div class="tr" style="top:646px">
<span class="c1">Accessibility-First Web Platform</span><span class="c2">User Experience &amp; Interface Design</span><span class="c3">2026-06-05 2:32 PM</span>
<span class="badge bh">OnHold</span>
<span class="act a1"><svg width="16" height="16" viewBox="0 0 24 24" fill="none" stroke="currentColor" stroke-width="2" stroke-linecap="round" stroke-linejoin="round" ><path d="M5 12h14"/><path d="M12 5v14"/></svg></span><span class="act a2"><svg width="16" height="16" viewBox="0 0 24 24" fill="none" stroke="currentColor" stroke-width="2" stroke-linecap="round" stroke-linejoin="round" ><path d="M2.062 12.348a1 1 0 0 1 0-.696 10.75 10.75 0 0 1 19.876 0 1 1 0 0 1 0 .696 10.75 10.75 0 0 1-19.876 0"/><circle cx="12" cy="12" r="3"/></svg></span><span class="act a3"><svg width="16" height="16" viewBox="0 0 24 24" fill="none" stroke="currentColor" stroke-width="2" stroke-linecap="round" stroke-linejoin="round" ><path d="M12 3H5a2 2 0 0 0-2 2v14a2 2 0 0 0 2 2h14a2 2 0 0 0 2-2v-7"/><path d="M18.375 2.625a1 1 0 0 1 3 3l-9.013 9.014a2 2 0 0 1-.853.505l-2.873.84a.5.5 0 0 1-.62-.62l.84-2.873a2 2 0 0 1 .506-.852z"/></svg></span><span class="act a4"><svg width="16" height="16" viewBox="0 0 24 24" fill="none" stroke="currentColor" stroke-width="2" stroke-linecap="round" stroke-linejoin="round" ><path d="M3 6h18"/><path d="M19 6v14c0 1-1 2-2 2H7c-1 0-2-1-2-2V6"/><path d="M8 6V4c0-1 1-2 2-2h4c1 0 2 1 2 2v2"/><line x1="10" x2="10" y1="11" y2="17"/><line x1="14" x2="14" y1="11" y2="17"/></svg></span>
</div><div class="tr" style="top:711px">
<span class="c1">Enterprise Resource Planning Upgrade</span><span class="c2">Digital Transformation</span><span class="c3">2026-07-05 2:32 PM</span>
<span class="badge bh">OnHold</span>
<span class="act a1"><svg width="16" height="16" viewBox="0 0 24 24" fill="none" stroke="currentColor" stroke-width="2" stroke-linecap="round" stroke-linejoin="round" ><path d="M5 12h14"/><path d="M12 5v14"/></svg></span><span class="act a2"><svg width="16" height="16" viewBox="0 0 24 24" fill="none" stroke="currentColor" stroke-width="2" stroke-linecap="round" stroke-linejoin="round" ><path d="M2.062 12.348a1 1 0 0 1 0-.696 10.75 10.75 0 0 1 19.876 0 1 1 0 0 1 0 .696 10.75 10.75 0 0 1-19.876 0"/><circle cx="12" cy="12" r="3"/></svg></span><span class="act a3"><svg width="16" height="16" viewBox="0 0 24 24" fill="none" stroke="currentColor" stroke-width="2" stroke-linecap="round" stroke-linejoin="round" ><path d="M12 3H5a2 2 0 0 0-2 2v14a2 2 0 0 0 2 2h14a2 2 0 0 0 2-2v-7"/><path d="M18.375 2.625a1 1 0 0 1 3 3l-9.013 9.014a2 2 0 0 1-.853.505l-2.873.84a.5.5 0 0 1-.62-.62l.84-2.873a2 2 0 0 1 .506-.852z"/></svg></span><span class="act a4"><svg width="16" height="16" viewBox="0 0 24 24" fill="none" stroke="currentColor" stroke-width="2" stroke-linecap="round" stroke-linejoin="round" ><path d="M3 6h18"/><path d="M19 6v14c0 1-1 2-2 2H7c-1 0-2-1-2-2V6"/><path d="M8 6V4c0-1 1-2 2-2h4c1 0 2 1 2 2v2"/><line x1="10" x2="10" y1="11" y2="17"/><line x1="14" x2="14" y1="11" y2="17"/></svg></span>
</div><div class="tr" style="top:776px">
<span class="c1">Serverless Microservices Architecture</span><span class="c2">Cloud Computing &amp; Infrastructure</span><span class="c3">2026-03-30 2:32 PM</span>
<span class="badge bg">OnGoing</span>
<span class="act a1"><svg width="16" height="16" viewBox="0 0 24 24" fill="none" stroke="currentColor" stroke-width="2" stroke-linecap="round" stroke-linejoin="round" ><path d="M5 12h14"/><path d="M12 5v14"/></svg></span><span class="act a2"><svg width="16" height="16" viewBox="0 0 24 24" fill="none" stroke="currentColor" stroke-width="2" stroke-linecap="round" stroke-linejoin="round" ><path d="M2.062 12.348a1 1 0 0 1 0-.696 10.75 10.75 0 0 1 19.876 0 1 1 0 0 1 0 .696 10.75 10.75 0 0 1-19.876 0"/><circle cx="12" cy="12" r="3"/></svg></span><span class="act a3"><svg width="16" height="16" viewBox="0 0 24 24" fill="none" stroke="currentColor" stroke-width="2" stroke-linecap="round" stroke-linejoin="round" ><path d="M12 3H5a2 2 0 0 0-2 2v14a2 2 0 0 0 2 2h14a2 2 0 0 0 2-2v-7"/><path d="M18.375 2.625a1 1 0 0 1 3 3l-9.013 9.014a2 2 0 0 1-.853.505l-2.873.84a.5.5 0 0 1-.62-.62l.84-2.873a2 2 0 0 1 .506-.852z"/></svg></span><span class="act a4"><svg width="16" height="16" viewBox="0 0 24 24" fill="none" stroke="currentColor" stroke-width="2" stroke-linecap="round" stroke-linejoin="round" ><path d="M3 6h18"/><path d="M19 6v14c0 1-1 2-2 2H7c-1 0-2-1-2-2V6"/><path d="M8 6V4c0-1 1-2 2-2h4c1 0 2 1 2 2v2"/><line x1="10" x2="10" y1="11" y2="17"/><line x1="14" x2="14" y1="11" y2="17"/></svg></span>
</div><div class="tr" style="top:841px">
<span class="c1">Digital Transformation Strategy</span><span class="c2">Digital Transformation</span><span class="c3">2026-04-15 2:32 PM</span>
<span class="badge bg">OnGoing</span>
<span class="act a1"><svg width="16" height="16" viewBox="0 0 24 24" fill="none" stroke="currentColor" stroke-width="2" stroke-linecap="round" stroke-linejoin="round" ><path d="M5 12h14"/><path d="M12 5v14"/></svg></span><span class="act a2"><svg width="16" height="16" viewBox="0 0 24 24" fill="none" stroke="currentColor" stroke-width="2" stroke-linecap="round" stroke-linejoin="round" ><path d="M2.062 12.348a1 1 0 0 1 0-.696 10.75 10.75 0 0 1 19.876 0 1 1 0 0 1 0 .696 10.75 10.75 0 0 1-19.876 0"/><circle cx="12" cy="12" r="3"/></svg></span><span class="act a3"><svg width="16" height="16" viewBox="0 0 24 24" fill="none" stroke="currentColor" stroke-width="2" stroke-linecap="round" stroke-linejoin="round" ><path d="M12 3H5a2 2 0 0 0-2 2v14a2 2 0 0 0 2 2h14a2 2 0 0 0 2-2v-7"/><path d="M18.375 2.625a1 1 0 0 1 3 3l-9.013 9.014a2 2 0 0 1-.853.505l-2.873.84a.5.5 0 0 1-.62-.62l.84-2.873a2 2 0 0 1 .506-.852z"/></svg></span><span class="act a4"><svg width="16" height="16" viewBox="0 0 24 24" fill="none" stroke="currentColor" stroke-width="2" stroke-linecap="round" stroke-linejoin="round" ><path d="M3 6h18"/><path d="M19 6v14c0 1-1 2-2 2H7c-1 0-2-1-2-2V6"/><path d="M8 6V4c0-1 1-2 2-2h4c1 0 2 1 2 2v2"/><line x1="10" x2="10" y1="11" y2="17"/><line x1="14" x2="14" y1="11" y2="17"/></svg></span>
</div>
 <div class="showing">Showing 1 to 10 of 20 results</div>
 <div class="pprev"><svg width="16" height="16" viewBox="0 0 24 24" fill="none" stroke="currentColor" stroke-width="2" stroke-linecap="round" stroke-linejoin="round" ><path d="m15 18-6-6 6-6"/></svg><span>Previous</span></div>
 <div class="p1">1</div><div class="p2">2</div>
 <div class="pnext"><span>Next</span><svg width="16" height="16" viewBox="0 0 24 24" fill="none" stroke="currentColor" stroke-width="2" stroke-linecap="round" stroke-linejoin="round" ><path d="m9 18 6-6-6-6"/></svg></div>
</body></html>
